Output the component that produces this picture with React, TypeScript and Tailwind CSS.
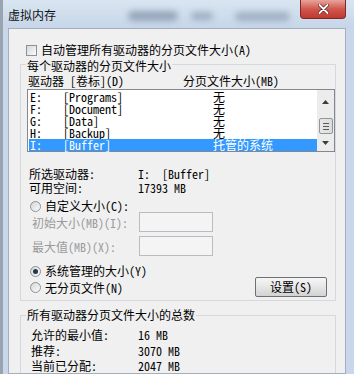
const FONT = "font-['Noto_Sans_Mono_CJK_SC','Noto_Sans_CJK_SC',sans-serif]";

const drives = [
  { letter: "E:", label: "[Programs]", size: "无" },
  { letter: "F:", label: "[Document]", size: "无" },
  { letter: "G:", label: "[Data]", size: "无" },
  { letter: "H:", label: "[Backup]", size: "无" },
  { letter: "I:", label: "[Buffer]", size: "托管的系统", selected: true },
];

function Radio({ checked }: { checked?: boolean }) {
  return (
    <span className="w-[11px] h-[11px] shrink-0 rounded-full border border-[#8e9296] bg-linear-to-br from-[#d4d6d8] to-[#fbfbfb] flex items-center justify-center">
      {checked && <span className="w-[5px] h-[5px] rounded-full bg-[#24384c]" />}
    </span>
  );
}

function Field() {
  return <div className="w-[74px] h-[20px] border border-[#b9bcc0] bg-[#f4f4f4]" />;
}

function ScrollBar() {
  return (
    <div className="w-[17px] shrink-0 bg-[#ececec] flex flex-col items-center">
      <div className="h-[17px] w-full flex items-center justify-center mt-[3px]">
        <svg width="7" height="4" viewBox="0 0 7 4">
          <path d="M0 4 L3.5 0 L7 4 Z" fill="#3d3d3d" />
        </svg>
      </div>
      <div className="mt-[8px] w-[14px] h-[16px] rounded-[2px] border border-[#8f959b] bg-linear-to-r from-[#e8e8e8] to-[#dcdcdc] flex flex-col items-center justify-center gap-[2px]">
        <span className="w-[6px] h-px bg-[#5a5a5a]" />
        <span className="w-[6px] h-px bg-[#5a5a5a]" />
        <span className="w-[6px] h-px bg-[#5a5a5a]" />
      </div>
      <div className="h-[17px] w-full flex items-center justify-center mt-auto">
        <svg width="7" height="4" viewBox="0 0 7 4">
          <path d="M0 0 L3.5 4 L7 0 Z" fill="#3d3d3d" />
        </svg>
      </div>
    </div>
  );
}

export default function App() {
  return (
    <div className={`${FONT} w-[354px] h-[374px] overflow-hidden flex flex-col bg-[#c8d8ea] border-l-[3px] border-[#9aa4ae] text-[12px] leading-[12px] text-black`}>
      {/* 标题栏 */}
      <div className="relative h-[28px] shrink-0 flex items-start bg-linear-to-b from-[#d9e5f1] to-[#c6d6e8]">
        <span className="absolute left-[125px] top-[11px] w-[50px] h-[10px] rounded-full bg-[#7d90a6] blur-[3px] opacity-70" />
        <span className="absolute left-[188px] top-[12px] w-[22px] h-[8px] rounded-full bg-[#7d90a6] blur-[3px] opacity-60" />
        <span className="absolute left-[232px] top-[12px] w-[55px] h-[9px] rounded-full bg-[#8094aa] blur-[3px] opacity-60" />
        <span className="relative pl-[5px] pt-[9px] text-[12px] leading-[12px] font-['Noto_Sans_CJK_SC',sans-serif] text-[#111]">
          虚拟内存
        </span>
        <div className="relative ml-auto mr-[8px] w-[46px] h-[19px] rounded-b-[4px] border border-t-0 border-[#7d2a25] bg-linear-to-b from-[#e7a39b] via-[#d0564d] to-[#c2382e] flex items-center justify-center">
          <svg width="11" height="10" viewBox="0 0 11 10">
            <path d="M1.5 1 L9.5 9 M9.5 1 L1.5 9" stroke="#5a1a16" strokeWidth="3.2" strokeLinecap="round" />
            <path d="M1.5 1 L9.5 9 M9.5 1 L1.5 9" stroke="#ffffff" strokeWidth="1.8" strokeLinecap="round" />
          </svg>
        </div>
      </div>

      {/* 内容 */}
      <div className="ml-[5px] mr-[8px] flex-1 border border-[#a3afbc] bg-[#f0f0f0] flex flex-col">
        <div className="mt-[15px] pl-[17px] h-[12px] flex items-center gap-[4px]">
          <span className="w-[11px] h-[11px] border border-[#8e9296] bg-linear-to-br from-[#d6d8da] to-[#fbfbfb]" />
          <span>自动管理所有驱动器的分页文件大小(A)</span>
        </div>

        {/* 每个驱动器 */}
        <div className="mt-[8px] ml-[11px] w-[316px] border border-[#d5d9dd] flex flex-col pb-[3px]">
          <span className="-mt-[5px] ml-[5px] px-[1px] w-fit bg-[#f0f0f0]">每个驱动器的分页文件大小</span>
          <div className="mt-[3px] pl-[7px] flex">
            <span className="w-[155px]">驱动器 [卷标](D)</span>
            <span>分页文件大小(MB)</span>
          </div>
          <div className="mt-[2px] ml-[6px] w-[308px] h-[63px] border border-[#828790] bg-white flex">
            <div className="flex-1 pt-[1px] pl-[1px] flex flex-col">
              {drives.map((d) => (
                <div
                  key={d.letter}
                  className={`h-[12px] pl-[1px] flex ${d.selected ? "bg-[#3399ff] text-white" : ""}`}
                >
                  <span className="w-[33px]">{d.letter}</span>
                  <span className="w-[150px]">{d.label}</span>
                  <span>{d.size}</span>
                </div>
              ))}
            </div>
            <ScrollBar />
          </div>

          <div className="mt-[16px] pl-[8px] flex">
            <span className="w-[109px]">所选驱动器:</span>
            <span className="whitespace-pre">I:  [Buffer]</span>
          </div>
          <div className="mt-[2px] pl-[8px] flex">
            <span className="w-[109px]">可用空间:</span>
            <span>17393 MB</span>
          </div>

          <div className="mt-[6px] pl-[9px] h-[12px] flex items-center gap-[4px]">
            <Radio />
            <span>自定义大小(C):</span>
          </div>
          <div className="pl-[11px] h-[20px] flex items-center text-[#9a9a9a]">
            <span className="w-[107px] pt-[1px]">初始大小(MB)(I):</span>
            <Field />
          </div>
          <div className="mt-[4px] pl-[11px] h-[20px] flex items-center text-[#9a9a9a]">
            <span className="w-[107px] pt-[1px]">最大值(MB)(X):</span>
            <Field />
          </div>

          <div className="mt-[9px] pl-[9px] h-[12px] flex items-center gap-[4px]">
            <Radio checked />
            <span>系统管理的大小(Y)</span>
          </div>
          <div className="pl-[9px] h-[20px] flex items-center gap-[4px]">
            <Radio />
            <span className="pt-[1px]">无分页文件(N)</span>
            <button className="ml-auto mr-[8px] w-[72px] h-[20px] border border-[#707070] rounded-[2px] bg-linear-to-b from-[#f6f6f6] via-[#e6e6e6] to-[#d2d2d2] text-[12px] leading-[12px]">
              设置(S)
            </button>
          </div>
        </div>

        {/* 总数 */}
        <div className="mt-[14px] ml-[11px] w-[316px] flex-1 border border-[#d5d9dd] border-b-0 flex flex-col">
          <span className="-mt-[7px] ml-[5px] px-[1px] w-fit bg-[#f0f0f0]">所有驱动器分页文件大小的总数</span>
          <div className="mt-[8px] pl-[10px] flex">
            <span className="w-[107px]">允许的最小值:</span>
            <span>16 MB</span>
          </div>
          <div className="mt-[4px] pl-[10px] flex">
            <span className="w-[107px]">推荐:</span>
            <span>3070 MB</span>
          </div>
          <div className="mt-[3px] pl-[10px] flex">
            <span className="w-[107px]">当前已分配:</span>
            <span>2047 MB</span>
          </div>
        </div>
      </div>
    </div>
  );
}
